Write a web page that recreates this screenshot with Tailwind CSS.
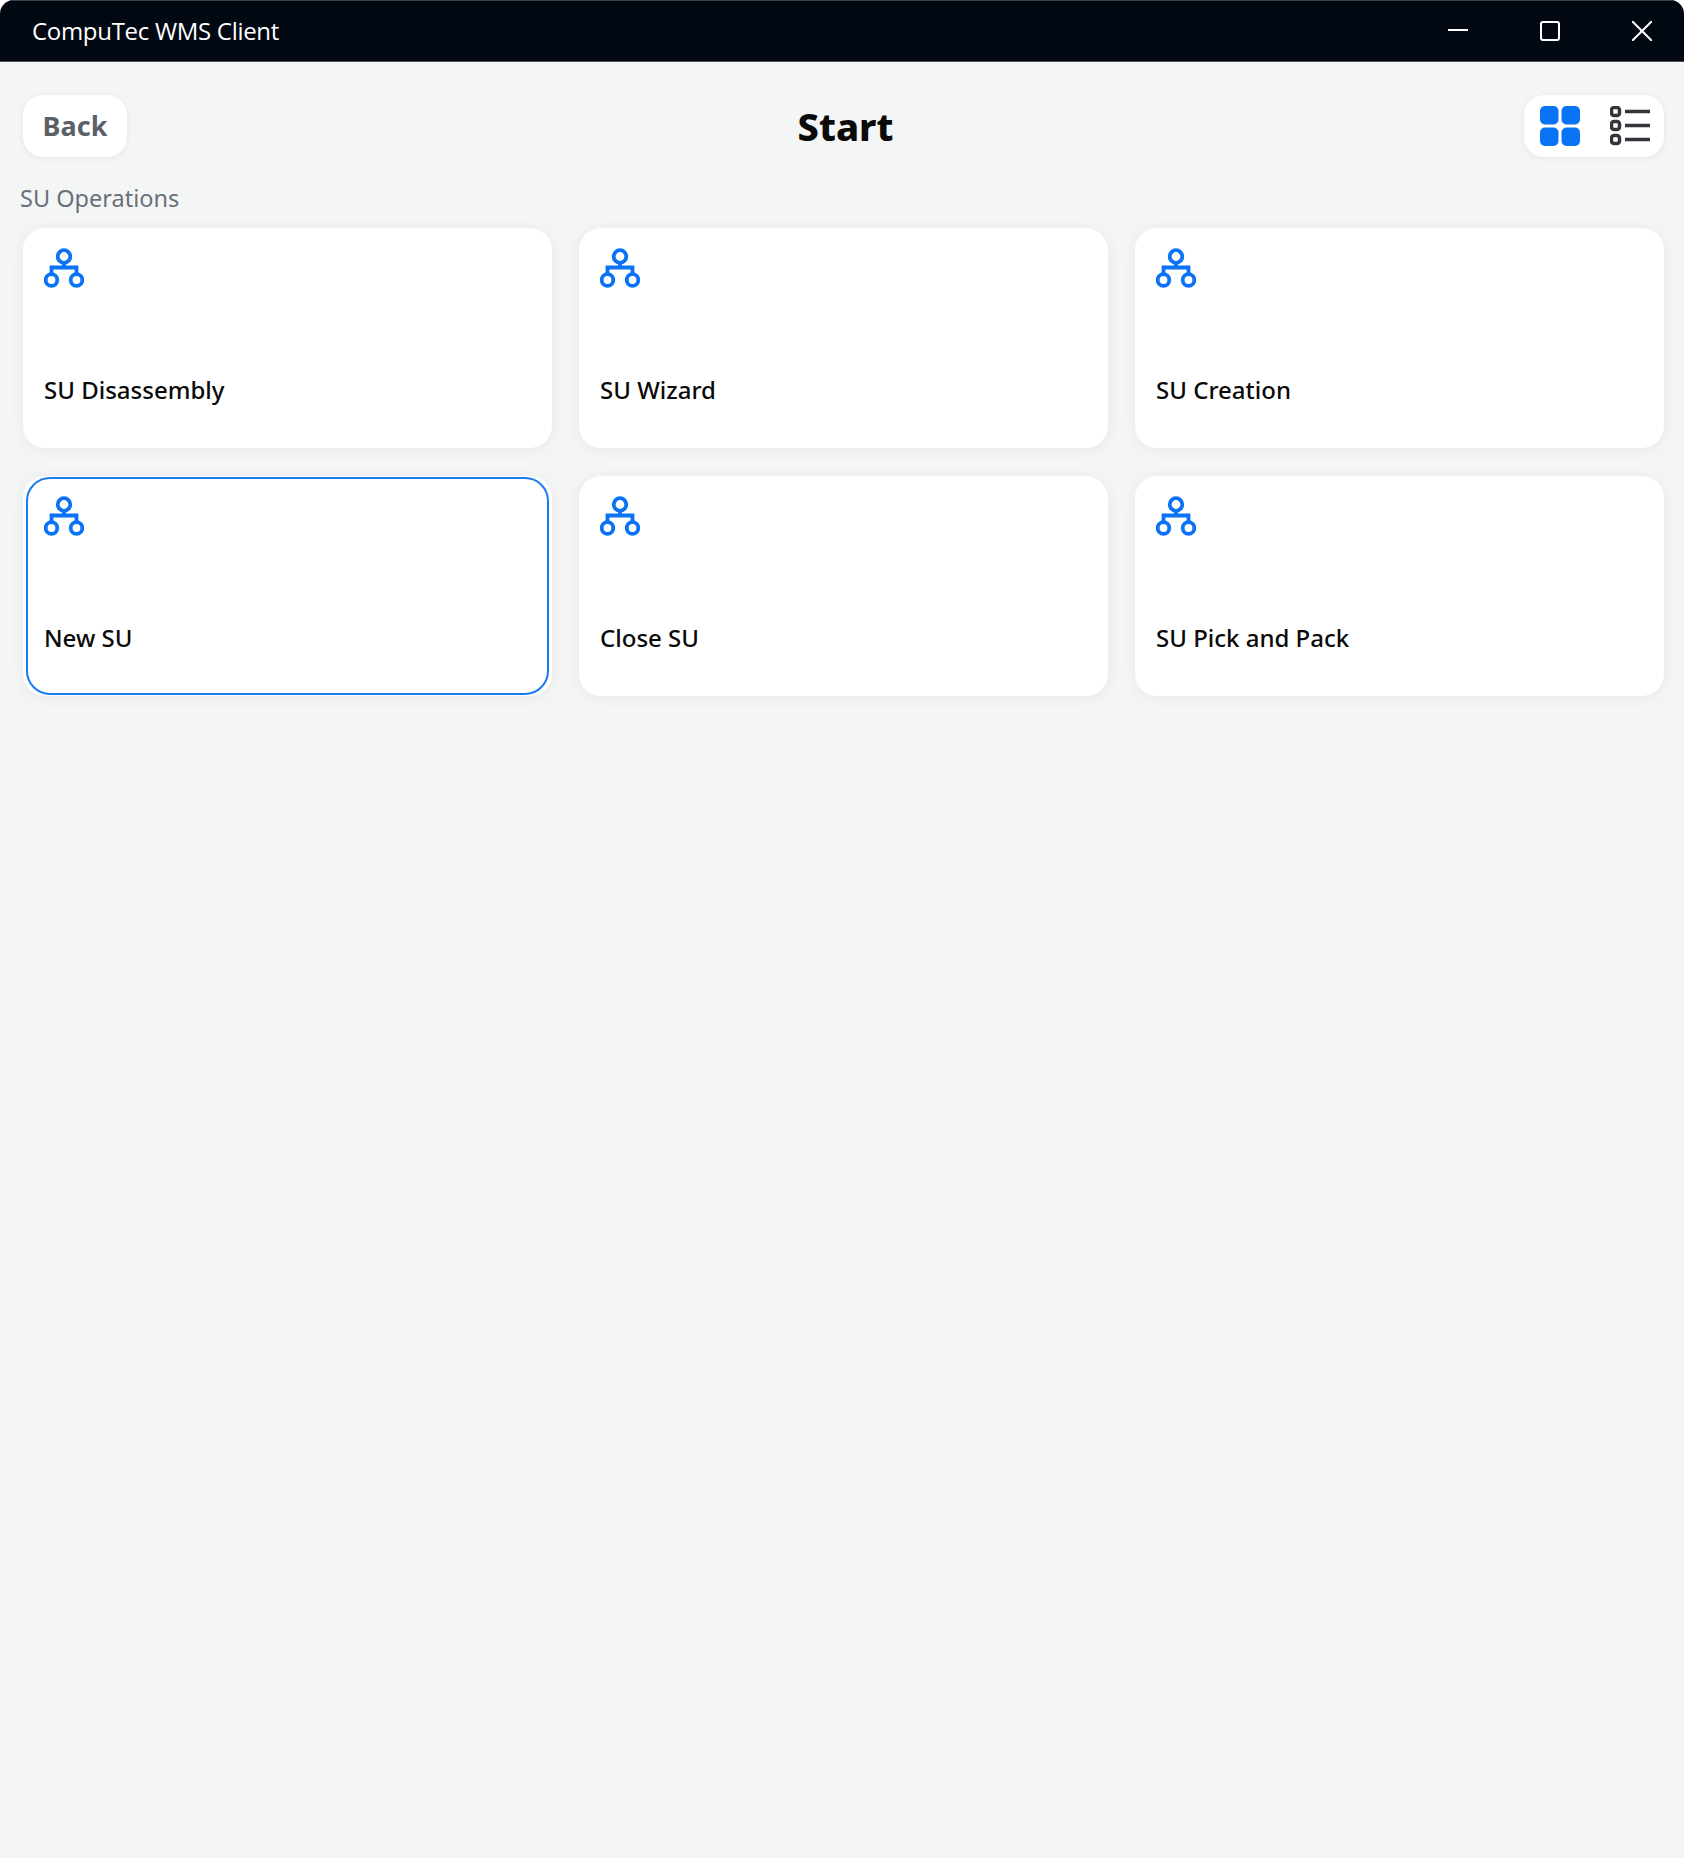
<!DOCTYPE html>
<html lang="en">
<head>
    <meta charset="UTF-8">
    <meta name="viewport" content="width=device-width, initial-scale=1.0">
    <title>CompuTec WMS Client</title>
    <script src="https://cdn.jsdelivr.net/npm/@tailwindcss/browser@4"></script>
</head>
<body class="bg-white font-['Noto_Sans',sans-serif]">
    <div class="h-[1858px] flex flex-col bg-[#f4f6f6] rounded-t-[14px] overflow-hidden">
        <!-- title bar -->
        <div class="h-[62px] shrink-0 flex items-center justify-between bg-[#010812] text-white border-y border-t-[#3a4148] border-b-[#4a5158]">
            <span class="pl-8 text-[24px] leading-none font-['Open_Sans',sans-serif] tracking-[-0.3px]">CompuTec WMS Client</span>
            <div class="flex items-center gap-[72px] pr-8 text-white">
                <svg class="w-5 h-5" viewBox="0 0 20 20" fill="none" stroke="currentColor" stroke-width="2"><path d="M0 9h20"/></svg>
                <svg class="w-5 h-5" viewBox="0 0 20 20" fill="none" stroke="currentColor" stroke-width="2"><rect x="1" y="1" width="18" height="18" rx="2"/></svg>
                <svg class="w-5 h-5" viewBox="0 0 20 20" fill="none" stroke="currentColor" stroke-width="2"><path d="M0 0l20 20M20 0L0 20"/></svg>
            </div>
        </div>

        <!-- header -->
        <div class="mt-[33px] pl-[23px] pr-5 grid grid-cols-3 items-center">
            <button class="justify-self-start w-[104px] h-[62px] bg-white rounded-[20px] shadow-[0_1px_6px_rgba(0,0,0,0.07)] text-[27px] font-bold text-[#5b6068]">Back</button>
            <h1 class="justify-self-center pl-1 text-[38px] leading-none font-extrabold text-[#0a0a0a]">Start</h1>
            <div class="justify-self-end w-[140px] h-[62px] bg-white rounded-[20px] shadow-[0_1px_6px_rgba(0,0,0,0.07)] flex items-center justify-between pl-4 pr-[14px]">
                <svg class="w-10 h-10" viewBox="0 0 40 40" fill="#0a72f5">
                    <rect width="18.5" height="18.5" rx="5"/><rect x="21.5" width="18.5" height="18.5" rx="5"/>
                    <rect y="21.5" width="18.5" height="18.5" rx="5"/><rect x="21.5" y="21.5" width="18.5" height="18.5" rx="5"/>
                </svg>
                <svg class="w-10 h-10" viewBox="0 0 40 40" fill="none" stroke="#33363a" stroke-width="3.5">
                    <rect x="1.5" y="1.5" width="8" height="8" rx="2.5"/><rect x="1.5" y="15.5" width="8" height="8" rx="2.5"/><rect x="1.5" y="29.5" width="8" height="8" rx="2.5"/>
                    <path d="M15 5.5h25M15 19.5h25M15 33.5h25"/>
                </svg>
            </div>
        </div>

        <p class="mt-[26px] pl-5 text-[23.5px] leading-[30px] text-[#6a7079]">SU Operations</p>

        <!-- tiles -->
        <div class="mt-[15px] pl-[23px] pr-5 grid grid-cols-3 gap-x-[27px] gap-y-[28px]">
            <div class="relative h-[220px] bg-white rounded-[22px] shadow-[0_2px_16px_rgba(0,0,0,0.06)] pl-[21px] pt-5 flex flex-col">
                <svg class="w-10 h-10 shrink-0" viewBox="0 0 40 40" fill="none" stroke="#0a72f5" stroke-width="3.8"><circle cx="20" cy="8.5" r="6.3"/><circle cx="7.5" cy="32" r="5.8"/><circle cx="32.5" cy="32" r="5.8"/><path d="M20 15v4.5M7.5 26v-6.5h25V26"/></svg>
                <span class="mt-[87px] text-[24px] leading-[30px] font-medium text-[#0a0a0a]">SU Disassembly</span>
            </div>
            <div class="relative h-[220px] bg-white rounded-[22px] shadow-[0_2px_16px_rgba(0,0,0,0.06)] pl-[21px] pt-5 flex flex-col">
                <svg class="w-10 h-10 shrink-0" viewBox="0 0 40 40" fill="none" stroke="#0a72f5" stroke-width="3.8"><circle cx="20" cy="8.5" r="6.3"/><circle cx="7.5" cy="32" r="5.8"/><circle cx="32.5" cy="32" r="5.8"/><path d="M20 15v4.5M7.5 26v-6.5h25V26"/></svg>
                <span class="mt-[87px] text-[24px] leading-[30px] font-medium text-[#0a0a0a]">SU Wizard</span>
            </div>
            <div class="relative h-[220px] bg-white rounded-[22px] shadow-[0_2px_16px_rgba(0,0,0,0.06)] pl-[21px] pt-5 flex flex-col">
                <svg class="w-10 h-10 shrink-0" viewBox="0 0 40 40" fill="none" stroke="#0a72f5" stroke-width="3.8"><circle cx="20" cy="8.5" r="6.3"/><circle cx="7.5" cy="32" r="5.8"/><circle cx="32.5" cy="32" r="5.8"/><path d="M20 15v4.5M7.5 26v-6.5h25V26"/></svg>
                <span class="mt-[87px] text-[24px] leading-[30px] font-medium text-[#0a0a0a]">SU Creation</span>
            </div>
            <div class="relative h-[220px] bg-white rounded-[22px] shadow-[0_2px_16px_rgba(0,0,0,0.06)] pl-[21px] pt-5 flex flex-col">
                <div class="absolute inset-y-px inset-x-[3px] rounded-[24px] border-2 border-[#1b7bf0]"></div>
                <svg class="w-10 h-10 shrink-0" viewBox="0 0 40 40" fill="none" stroke="#0a72f5" stroke-width="3.8"><circle cx="20" cy="8.5" r="6.3"/><circle cx="7.5" cy="32" r="5.8"/><circle cx="32.5" cy="32" r="5.8"/><path d="M20 15v4.5M7.5 26v-6.5h25V26"/></svg>
                <span class="mt-[87px] text-[24px] leading-[30px] font-medium text-[#0a0a0a]">New SU</span>
            </div>
            <div class="relative h-[220px] bg-white rounded-[22px] shadow-[0_2px_16px_rgba(0,0,0,0.06)] pl-[21px] pt-5 flex flex-col">
                <svg class="w-10 h-10 shrink-0" viewBox="0 0 40 40" fill="none" stroke="#0a72f5" stroke-width="3.8"><circle cx="20" cy="8.5" r="6.3"/><circle cx="7.5" cy="32" r="5.8"/><circle cx="32.5" cy="32" r="5.8"/><path d="M20 15v4.5M7.5 26v-6.5h25V26"/></svg>
                <span class="mt-[87px] text-[24px] leading-[30px] font-medium text-[#0a0a0a]">Close SU</span>
            </div>
            <div class="relative h-[220px] bg-white rounded-[22px] shadow-[0_2px_16px_rgba(0,0,0,0.06)] pl-[21px] pt-5 flex flex-col">
                <svg class="w-10 h-10 shrink-0" viewBox="0 0 40 40" fill="none" stroke="#0a72f5" stroke-width="3.8"><circle cx="20" cy="8.5" r="6.3"/><circle cx="7.5" cy="32" r="5.8"/><circle cx="32.5" cy="32" r="5.8"/><path d="M20 15v4.5M7.5 26v-6.5h25V26"/></svg>
                <span class="mt-[87px] text-[24px] leading-[30px] font-medium text-[#0a0a0a]">SU Pick and Pack</span>
            </div>
        </div>
    </div>
</body>
</html>
